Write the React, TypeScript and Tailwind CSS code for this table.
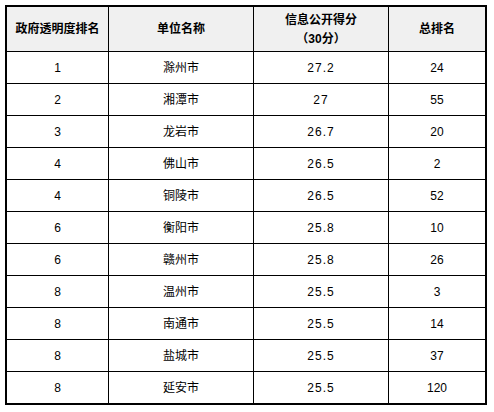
const rows: [string, string, string, string][] = [
  ["1", "滁州市", "27.2", "24"],
  ["2", "湘潭市", "27", "55"],
  ["3", "龙岩市", "26.7", "20"],
  ["4", "佛山市", "26.5", "2"],
  ["4", "铜陵市", "26.5", "52"],
  ["6", "衡阳市", "25.8", "10"],
  ["6", "赣州市", "25.8", "26"],
  ["8", "温州市", "25.5", "3"],
  ["8", "南通市", "25.5", "14"],
  ["8", "盐城市", "25.5", "37"],
  ["8", "延安市", "25.5", "120"],
];

const font = "font-['Liberation_Sans','Noto_Sans_CJK_SC',sans-serif]";

export default function App() {
  return (
    <div className={`min-h-screen bg-white p-[5px] text-[12px] text-black ${font}`}>
      <div className="w-[482px] border-2 border-black">
        <div className="grid grid-cols-[101px_145px_135px_97px]">
          <div className="flex h-[44px] items-center justify-center bg-[#f0f0f0] font-bold">
            政府透明度排名
          </div>
          <div className="flex h-[44px] items-center justify-center border-l border-black bg-[#f0f0f0] font-bold">
            单位名称
          </div>
          <div className="flex h-[44px] flex-col items-center justify-center gap-[3px] border-l border-black bg-[#f0f0f0] font-bold leading-4">
            <span>信息公开得分</span>
            <span>（30分）</span>
          </div>
          <div className="flex h-[44px] items-center justify-center border-l border-black bg-[#f0f0f0] font-bold">
            总排名
          </div>

          {rows.map((r, i) => (
            <Row key={i} cells={r} />
          ))}
        </div>
      </div>
    </div>
  );
}

function Row({ cells }: { cells: [string, string, string, string] }) {
  return (
    <>
      <div className="flex h-[32px] items-center justify-center border-t border-black">
        {cells[0]}
      </div>
      <div className="flex h-[32px] items-center justify-center border-l border-t border-black">
        {cells[1]}
      </div>
      <div className="flex h-[32px] items-center justify-center border-l border-t border-black tracking-[1px]">
        {cells[2]}
      </div>
      <div className="flex h-[32px] items-center justify-center border-l border-t border-black">
        {cells[3]}
      </div>
    </>
  );
}
